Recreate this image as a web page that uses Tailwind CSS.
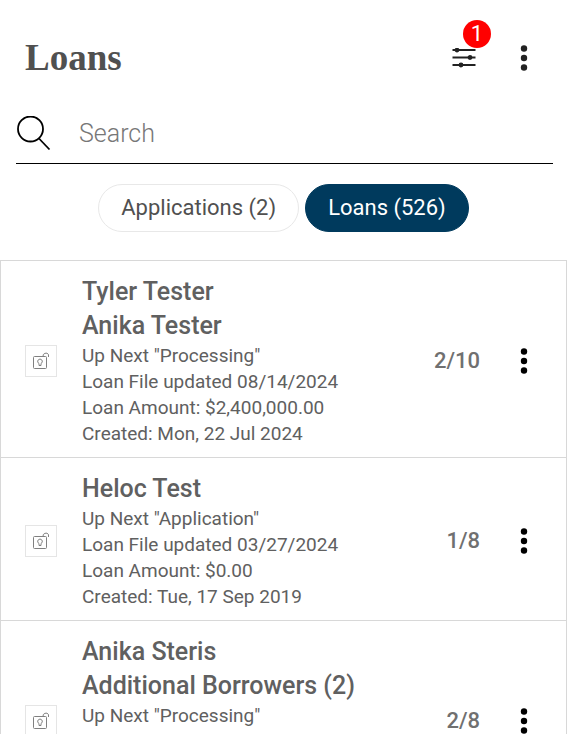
<!DOCTYPE html>
<html lang="en">
<head>
  <meta charset="UTF-8" />
  <meta name="viewport" content="width=device-width, initial-scale=1.0"/>
  <title>Loans</title>
  <script src="https://cdn.jsdelivr.net/npm/@tailwindcss/browser@4"></script>
</head>
<body class="flex h-screen flex-col overflow-hidden bg-white font-[Roboto,sans-serif] text-[#606060]">

  <!-- icons shared by the rows -->
  <svg class="hidden">
    <symbol id="dots" viewBox="0 0 8 26">
      <circle cx="4" cy="3.5" r="3.2"/><circle cx="4" cy="13" r="3.2"/><circle cx="4" cy="22.5" r="3.2"/>
    </symbol>
    <symbol id="unlock" viewBox="0 0 18 18" fill="none" stroke="currentColor">
      <rect x="1.5" y="4.5" width="13" height="12" rx="1"/>
      <path d="M11 4.500a3 3 0 0 1 5.500-2V5M7 13.500v-2a2.300 2.300 0 1 1 2 0v2z"/>
    </symbol>
  </svg>

  <header class="flex items-center justify-between pt-8 pr-[39px] pl-[25px]">
    <h1 class="font-['Liberation_Serif',serif] text-[37px] leading-[50px] font-bold text-[#505050]">Loans</h1>
    <div class="flex items-center gap-7">
      <button class="relative p-4 text-[#222]" aria-label="Filters, 1 active">
        <svg class="h-5 w-6" viewBox="0 0 24 20" fill="currentColor" stroke="currentColor" stroke-width="1.8">
          <path d="M.5 2h23M.5 9.500h23M.5 17h23"/>
          <circle cx="5" cy="2" r="1.500"/><circle cx="18" cy="9.500" r="1.500"/><circle cx="9" cy="17" r="1.500"/>
        </svg>
        <span class="absolute -top-3 right-px size-7 rounded-full bg-[#f00] text-center text-[22px] leading-7 text-white">1</span>
      </button>
      <button class="text-[#222]" aria-label="More">
        <svg class="h-[26px] w-2" fill="currentColor"><use href="#dots"/></svg>
      </button>
    </div>
  </header>

  <label class="mt-[22px] mr-3.5 ml-4 flex h-[58px] items-center gap-[27px] border-b border-black pb-0.5">
    <svg class="size-9 shrink-0" viewBox="0 0 36 36" fill="none" stroke="#000" stroke-width="1.8">
      <circle cx="14.500" cy="13" r="12.500"/><path d="M23 22.500l10.500 11"/>
    </svg>
    <input type="search" placeholder="Search" aria-label="Search" class="min-w-0 flex-1 text-[25px] font-light outline-none placeholder:text-[#777]"/>
  </label>

  <div class="mt-5 mb-7 flex justify-center gap-1.5 text-[22px] leading-[46px]">
    <button class="rounded-full border border-[#e8e8e8] px-[22px] text-[#505050]">Applications (2)</button>
    <button class="rounded-full border border-[#003a5d] bg-[#003a5d] px-[22px] text-white">Loans (526)</button>
  </div>

  <ul class="min-h-0 flex-1 overflow-hidden border-x border-t border-[#d8d8d8] text-[19px] leading-[26px]">
    <li class="flex items-center border-b border-[#d8d8d8] pt-3.5 pr-[38px] pb-2.5 pl-6">
      <button class="border border-[#e5e5e5] p-1.5 text-[#808080]" aria-label="Unlock">
        <svg class="size-[18px]"><use href="#unlock"/></svg>
      </button>
      <div class="ml-[25px] flex-1">
        <h2 class="text-[25px] leading-[34px] font-medium">Tyler Tester<br>Anika Tester</h2>
        <p>Up Next "Processing"</p>
        <p>Loan File updated 08/14/2024</p>
        <p>Loan Amount: $2,400,000.00</p>
        <p>Created: Mon, 22 Jul 2024</p>
      </div>
      <span class="mr-10 text-[22px] font-medium text-[#707070]">2/10</span>
      <button class="text-black" aria-label="More"><svg class="h-[26px] w-2" fill="currentColor"><use href="#dots"/></svg></button>
    </li>
    <li class="flex items-center border-b border-[#d8d8d8] pt-3.5 pr-[38px] pb-2.5 pl-6">
      <button class="border border-[#e5e5e5] p-1.5 text-[#808080]" aria-label="Unlock">
        <svg class="size-[18px]"><use href="#unlock"/></svg>
      </button>
      <div class="ml-[25px] flex-1">
        <h2 class="text-[25px] leading-[34px] font-medium">Heloc Test</h2>
        <p>Up Next "Application"</p>
        <p>Loan File updated 03/27/2024</p>
        <p>Loan Amount: $0.00</p>
        <p>Created: Tue, 17 Sep 2019</p>
      </div>
      <span class="mr-10 text-[22px] font-medium text-[#707070]">1/8</span>
      <button class="text-black" aria-label="More"><svg class="h-[26px] w-2" fill="currentColor"><use href="#dots"/></svg></button>
    </li>
    <li class="flex min-h-[196px] items-center border-b border-[#d8d8d8] pt-3.5 pr-[38px] pb-2.5 pl-6">
      <button class="border border-[#e5e5e5] p-1.5 text-[#808080]" aria-label="Unlock">
        <svg class="size-[18px]"><use href="#unlock"/></svg>
      </button>
      <div class="ml-[25px] flex-1 self-start">
        <h2 class="text-[25px] leading-[34px] font-medium">Anika Steris<br>Additional Borrowers (2)</h2>
        <p>Up Next "Processing"</p>
        <p>Loan File updated 08/12/2024</p>
      </div>
      <span class="mr-10 text-[22px] font-medium text-[#707070]">2/8</span>
      <button class="text-black" aria-label="More"><svg class="h-[26px] w-2" fill="currentColor"><use href="#dots"/></svg></button>
    </li>
  </ul>

</body>
</html>
